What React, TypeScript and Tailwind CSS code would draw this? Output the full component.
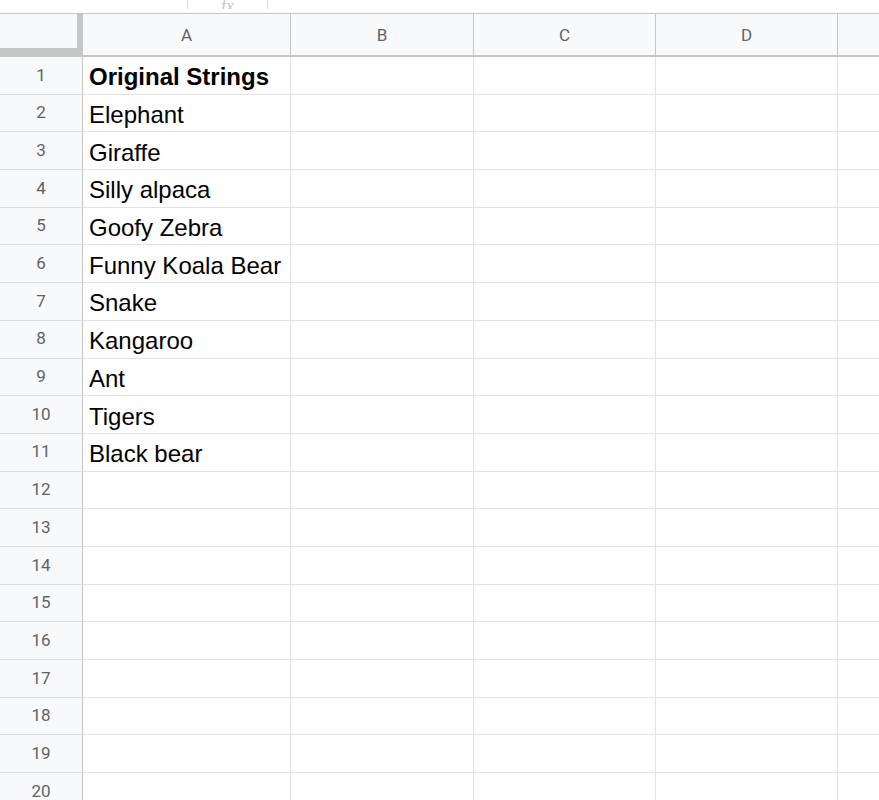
import React from "react";

const COLUMNS = [
  { label: "A", width: "w-[208px]" },
  { label: "B", width: "w-[183px]" },
  { label: "C", width: "w-[182px]" },
  { label: "D", width: "w-[182px]" },
];

const VALUES = [
  "Original Strings",
  "Elephant",
  "Giraffe",
  "Silly alpaca",
  "Goofy Zebra",
  "Funny Koala Bear",
  "Snake",
  "Kangaroo",
  "Ant",
  "Tigers",
  "Black bear",
];

const ROW_COUNT = 20;

export default function App() {
  const rows = Array.from({ length: ROW_COUNT }, (_, i) => i + 1);

  return (
    <div className="w-[879px] h-[800px] overflow-hidden bg-white font-['Liberation_Sans',Arial,sans-serif]">
      {/* formula bar remnant */}
      <div className="h-[13px] flex overflow-hidden">
        <div className="ml-[187px] w-[81px] h-[9px] border-x border-[#dadce0] flex justify-center items-end overflow-hidden">
          <span className="font-['Liberation_Serif',serif] italic text-[#c8c8c8] text-[18px] leading-none -mb-[6px]">
            fx
          </span>
        </div>
      </div>

      {/* column header */}
      <div className="flex h-[44px] border-t border-b-2 border-[#c4c7c5] bg-[#f8f9fa]">
        <div className="w-[83px] shrink-0 border-r-[6px] border-[#c4c7c5] flex flex-col">
          <div className="flex-1" />
          <div className="h-[7px] bg-[#c4c7c5]" />
        </div>
        {COLUMNS.map((col) => (
          <div
            key={col.label}
            className={`${col.width} shrink-0 border-r border-[#c4c7c5] flex items-center justify-center pt-[2px] font-['Roboto',sans-serif] text-[17px] text-[#5f6368]`}
          >
            {col.label}
          </div>
        ))}
        <div className="flex-1" />
      </div>

      {/* rows */}
      {rows.map((n) => (
        <div key={n} className="flex h-[37.7px] border-b border-[#e2e3e3]">
          <div className="w-[83px] shrink-0 bg-[#f8f9fa] border-r border-[#c4c7c5] flex items-center justify-center font-['Roboto',sans-serif] text-[17px] text-[#5f6368] -mb-px border-b border-b-[#dadce0]">
            {n}
          </div>
          <div className="w-[208px] shrink-0 border-r border-[#e2e3e3] flex items-center pl-[6px] pt-[4px] text-[24px] text-black whitespace-nowrap overflow-hidden">
            <span className={n === 1 ? "font-bold" : ""}>{VALUES[n - 1] ?? ""}</span>
          </div>
          <div className="w-[183px] shrink-0 border-r border-[#e2e3e3]" />
          <div className="w-[182px] shrink-0 border-r border-[#e2e3e3]" />
          <div className="w-[182px] shrink-0 border-r border-[#e2e3e3]" />
          <div className="flex-1" />
        </div>
      ))}
    </div>
  );
}
